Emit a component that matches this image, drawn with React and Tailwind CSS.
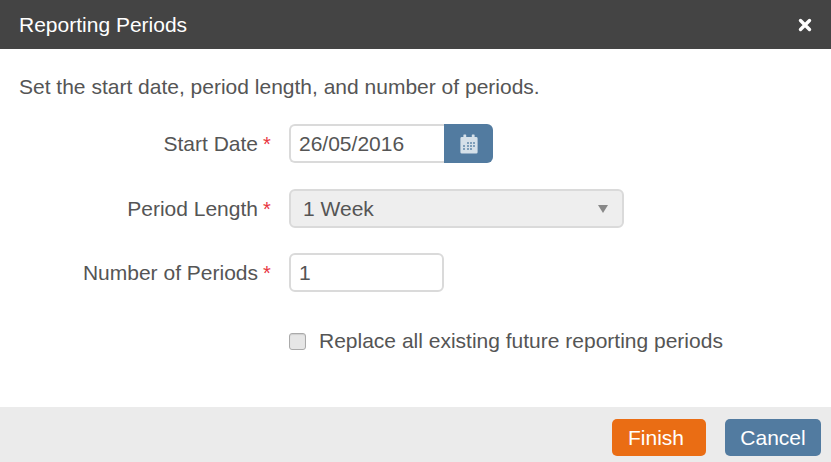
import React from 'react';

const labelClass = 'w-[258px] text-right';

function Star() {
  return <span className="w-[31px] pl-[5px] text-[#e8353f] text-[20px] leading-none">*</span>;
}

function CalendarIcon() {
  return (
    <svg width="18" height="20" viewBox="0 0 18 20" fill="none">
      <path fillRule="evenodd" fill="#d5e0e9" d="M4 0.5h1.6a.6.6 0 0 1 .6.6V3h5.6V1.1a.6.6 0 0 1 .6-.6H14a.6.6 0 0 1 .6.6V3h1.6A1.4 1.4 0 0 1 17.6 4.4v13.8a1.4 1.4 0 0 1-1.4 1.4H1.8A1.4 1.4 0 0 1 .4 18.2V4.4A1.4 1.4 0 0 1 1.8 3h1.6V1.1a.6.6 0 0 1 .6-.6Z" />
      <g fill="#7f9fba">
        <rect x="7" y="8" width="2" height="2" />
        <rect x="10" y="8" width="2" height="2" />
        <rect x="13" y="8" width="2" height="2" />
        <rect x="3" y="11" width="2" height="2" />
        <rect x="7" y="11" width="2" height="2" />
        <rect x="10" y="11" width="2" height="2" />
        <rect x="13" y="11" width="2" height="2" />
        <rect x="3" y="14" width="2" height="2" />
        <rect x="7" y="14" width="2" height="2" />
        <rect x="10" y="14" width="2" height="2" />
      </g>
    </svg>
  );
}

export default function App() {
  return (
    <div className="w-[831px] h-[462px] flex flex-col bg-white text-[#555555] text-[21px] overflow-hidden font-['Liberation_Sans',Arial,sans-serif]">
      {/* Title bar */}
      <div className="h-[49px] shrink-0 flex items-center justify-between pl-[19px] pr-[19px] bg-[#444444] text-white">
        <span>Reporting Periods</span>
        <svg width="14" height="14" viewBox="0 0 14 14">
          <path d="M2.5 2.5 11.5 11.5M11.5 2.5 2.5 11.5" stroke="#ffffff" strokeWidth="3.4" strokeLinecap="round" />
        </svg>
      </div>

      {/* Form */}
      <div className="flex-1 flex flex-col">
        <p className="pl-[19px] pt-[26px] leading-[24px]">Set the start date, period length, and number of periods.</p>

        <div className="mt-[25px] flex items-center h-[39px]">
          <span className={labelClass}>Start Date</span>
          <Star />
          <div className="w-[155px] h-full flex items-center pl-[8px] bg-white border-2 border-[#dadada] border-r-0 rounded-l-[6px]">26/05/2016</div>
          <div className="w-[49px] h-full flex items-center justify-center bg-[#527ba0] rounded-r-[6px]">
            <CalendarIcon />
          </div>
        </div>

        <div className="mt-[26px] flex items-center h-[39px]">
          <span className={labelClass}>Period Length</span>
          <Star />
          <div className="w-[335px] h-full flex items-center justify-between pl-[12px] pr-[14px] bg-[#eeeeee] border-2 border-[#dadada] rounded-[6px]">
            <span>1 Week</span>
            <span className="w-0 h-0 border-x-[5px] border-x-transparent border-t-[8px] border-t-[#888888]" />
          </div>
        </div>

        <div className="mt-[25px] flex items-center h-[39px]">
          <span className={labelClass}>Number of Periods</span>
          <Star />
          <div className="w-[155px] h-full flex items-center pl-[8px] bg-white border-2 border-[#dadada] rounded-[6px]">1</div>
        </div>

        <div className="mt-[39px] ml-[289px] flex items-center gap-[13px] h-[20px]">
          <span className="w-[17px] h-[17px] rounded-[3px] border border-[#aaaaaa] bg-[#e6e6e6] shadow-[inset_0_1px_1px_rgba(0,0,0,0.1)]" />
          <span>Replace all existing future reporting periods</span>
        </div>
      </div>

      {/* Footer */}
      <div className="h-[55px] shrink-0 flex items-start justify-end gap-[19px] pt-[12px] pr-[10px] bg-[#ebebeb] text-white">
        <div className="w-[94px] h-[37px] flex items-center justify-center pr-[6px] bg-[#ea6d14] rounded-[5px]">Finish</div>
        <div className="w-[96px] h-[37px] flex items-center justify-center bg-[#527ba0] rounded-[5px]">Cancel</div>
      </div>
    </div>
  );
}
